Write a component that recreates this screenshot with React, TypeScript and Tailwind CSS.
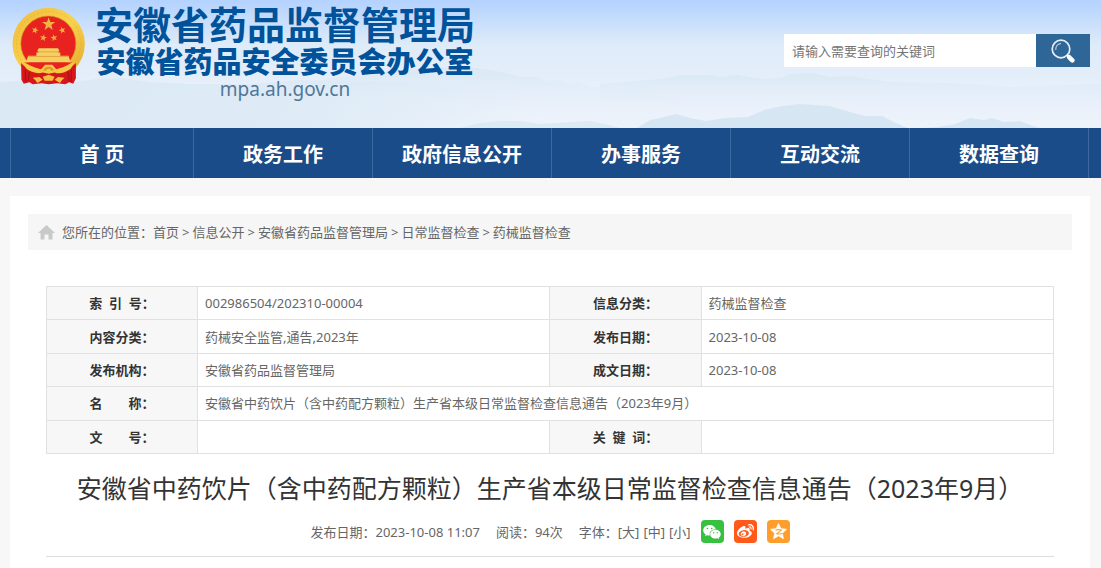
import React from "react";
import { AiFillWechat } from "react-icons/ai";
import { FaWeibo } from "react-icons/fa";

function starPoints(cx: number, cy: number, r: number, ratio = 0.4, turn = 0): string {
  return Array.from({ length: 10 }, (_, i) => {
    const radius = i % 2 === 0 ? r : r * ratio;
    const a = -Math.PI / 2 + turn + (i * Math.PI) / 5;
    return `${(cx + radius * Math.cos(a)).toFixed(1)},${(cy + radius * Math.sin(a)).toFixed(1)}`;
  }).join(" ");
}

function Emblem() {
  return (
    <svg viewBox="33 21 225 235" className="h-[78px] w-[75px] shrink-0" role="img" aria-label="国徽">
      <defs>
        <linearGradient id="gold" x1="0" y1="0" x2="1" y2="1">
          <stop offset="0" stopColor="#f0b93a" />
          <stop offset="0.5" stopColor="#f9d34c" />
          <stop offset="1" stopColor="#e3a62c" />
        </linearGradient>
      </defs>
      <circle cx="146" cy="132" r="109" fill="url(#gold)" />
      <circle cx="146" cy="132" r="97" fill="none" stroke="#d99b28" strokeWidth="2" strokeDasharray="7 5" opacity="0.5" />
      <path d="M63 190 64 240 71 252 88 248 98 254 124 251 146 254 172 251 196 254 208 248 220 252 228 236 228 190 210 206 146 216 80 206Z" fill="#d5161b" />
      <circle cx="145" cy="131" r="83" fill="#e8221f" stroke="#d69a26" strokeWidth="2" />
      <polygon points={starPoints(146, 73, 21)} fill="#f0b545" />
      <polygon points={starPoints(105, 91, 11, 0.4, 0.3)} fill="#efb040" />
      <polygon points={starPoints(187, 91, 11, 0.4, -0.3)} fill="#efb040" />
      <polygon points={starPoints(130, 114, 11, 0.4, 0.2)} fill="#efb040" />
      <polygon points={starPoints(162, 114, 11, 0.4, -0.2)} fill="#efb040" />
      <path d="M116 145H174L179 154H175V158H181V168H206L212 188H78L84 168H109V158H115V154H111Z" fill="#f6cf63" />
      <path d="M114 156H176M84 170H206" stroke="#d9912c" strokeWidth="2" />
      <path d="M72 188H218L200 200 176 206 146 194 116 206 90 200Z" fill="#e8221f" />
      <path d="M80 192C96 200 112 208 124 208L135 195H157L168 208C180 208 196 200 210 192L224 186 212 208C194 220 176 224 164 218L146 222 128 218C116 224 94 218 80 208L66 186Z" fill="#f6c944" />
      <path d="M130 212A17 17 0 0 1 162 212L154 212A9 9 0 0 0 138 212Z" fill="#e0962a" />
      <path d="M128 231 146 225 164 231 158 243H134ZM98 234 118 232 128 240 112 250 106 242ZM194 234 174 232 164 240 180 250 186 242Z" fill="#f3bd3e" />
      <path d="M76 210V246M88 216 84 244M214 210V246M204 216 208 244" stroke="#a80f14" strokeWidth="3" />
    </svg>
  );
}

function Mountains() {
  return (
    <svg
      viewBox="0 0 1101 128"
      preserveAspectRatio="none"
      className="pointer-events-none absolute inset-0 h-full w-full"
      aria-hidden="true"
    >
      <defs>
        <linearGradient id="far" x1="0" y1="0" x2="0" y2="1">
          <stop offset="0" stopColor="#d6e7f3" stopOpacity="0.75" />
          <stop offset="0.7" stopColor="#e6eff8" stopOpacity="0" />
        </linearGradient>
        <linearGradient id="left" x1="0" y1="0" x2="1" y2="0">
          <stop offset="0" stopColor="#dbe9f4" />
          <stop offset="0.6" stopColor="#dceaf5" stopOpacity="0.8" />
          <stop offset="1" stopColor="#dceaf5" stopOpacity="0" />
        </linearGradient>
      </defs>
      <path d="M0 82 30 80 62 84 95 79 122 78 150 82 190 84 250 84 300 80 400 82 540 90V128H0Z" fill="url(#left)" />
      <path d="M290 90 330 78 360 76 400 70 440 68 475 68 502 72 522 77 537 77 549 82 558 80 568 84 579 82 590 87 625 88 650 92 700 110 650 128 290 128Z" fill="url(#far)" />
      <path d="M600 84 660 79 680 75 706 75 720 77 738 75 762 79 780 78 792 74 812 73 830 77 850 76 890 82 950 83 1010 87 1101 84V128L600 128Z" fill="url(#far)" />
      <path d="M460 128 480 123 500 121 520 121 540 124 570 122 590 121 605 124 620 128Z" fill="#dceaf4" />
      <path d="M637 128 650 120 664 117 677 114 690 118 706 121 725 118 748 117 764 110 782 106 800 104 830 106 850 112 865 116 882 116 896 123 908 128Z" fill="#d6e7f3" />
      <path d="M922 128 938 127 955 124 970 118 984 120 992 118 1004 122 1020 121 1030 125 1040 128Z" fill="#d6e7f3" />
    </svg>
  );
}

function Magnifier() {
  return (
    <svg viewBox="0 0 24 24" className="h-6 w-6" fill="none" aria-hidden="true">
      <circle cx="10" cy="10" r="8.8" stroke="#e6eef5" strokeWidth="1.7" />
      <path d="M4.800 10.500A5.600 5.600 0 0 1 9.500 4.600" stroke="#c5d6e5" strokeWidth="1.1" strokeLinecap="round" />
      <path d="M16 16 17.500 17.500" stroke="#fff" strokeWidth="2" />
      <path d="M18.300 18.300 21.300 21.300" stroke="#fff" strokeWidth="4.600" strokeLinecap="round" />
    </svg>
  );
}

function QzoneStar() {
  return (
    <svg viewBox="0 0 24 24" className="h-[19px] w-[19px]" aria-hidden="true">
      <polygon points={starPoints(12, 12.5, 10.5, 0.48)} fill="#fff" stroke="#fff" strokeWidth="1" strokeLinejoin="round" />
      <path d="M8 10.200 Q12 9.200 15.600 10.200 L9.800 14.800 Q13 15.600 17 14.600" fill="none" stroke="#ff9e2c" strokeWidth="1.400" />
    </svg>
  );
}

const navItems = ["政务工作", "政府信息公开", "办事服务", "互动交流", "数据查询"];
const crumbs = ["首页", "信息公开", "安徽省药品监督管理局", "日常监督检查", "药械监督检查"];
const navLink = "flex h-[50px] items-center justify-center pt-1 text-xl font-bold text-white";
const labelCell = "border border-[#e1e1e1] bg-[#f7f7f7] p-0 text-center font-bold text-[#333] whitespace-pre";
const valueCell = "border border-[#e1e1e1] py-0 px-[7px] text-[#666]";

export default function App() {
  return (
    <div className="flex min-h-screen flex-col bg-[#f7f7f7] font-['Noto_Sans','Noto_Sans_CJK_SC',sans-serif] text-[13px] leading-5 text-[#666]">
      <header className="relative h-32 bg-linear-to-b from-[#b3d2ff] via-[#deebf9] via-35% to-[#eef3fb]">
        <Mountains />
        <div className="relative flex items-start justify-between px-[11px]">
          <a href="#home" className="flex items-start pt-[5px] text-[#00529a]">
            <span className="pt-[2px]"><Emblem /></span>
            <span className="flex flex-col items-center pl-[9px]">
              <span className="text-[38px] leading-[38px] font-bold">安徽省药品监督管理局</span>
              <span className="text-[29px] leading-[38px] font-black">安徽省药品安全委员会办公室</span>
              <span className="text-[19px] leading-4 font-normal text-[#4f7799]">mpa.ah.gov.cn</span>
            </span>
          </a>
          <form className="mt-[34px] flex h-[33px]" onSubmit={(e) => e.preventDefault()}>
            <input
              type="text"
              aria-label="搜索关键词"
              placeholder="请输入需要查询的关键词"
              className="w-[252px] bg-white px-2 text-[13px] outline-none placeholder:text-[#757575]"
            />
            <button type="submit" aria-label="搜索" className="flex w-[54px] items-center justify-center bg-[#2f6698]">
              <Magnifier />
            </button>
          </form>
        </div>
      </header>

      <nav className="bg-[#1a4c89] px-[10px]">
        <ul className="mr-[2px] flex border-l border-[#3d6a9c]">
          <li className="flex-[183] border-r border-[#3d6a9c]">
            <a href="#home" className={navLink}>首 页</a>
          </li>
          {navItems.map((item) => (
            <li key={item} className="flex-[179] border-r border-[#3d6a9c]">
              <a href={`#${item}`} className={navLink}>{item}</a>
            </li>
          ))}
        </ul>
      </nav>

      <main className="mt-[18px] mr-[11px] ml-[10px] flex-1 bg-white px-[18px] pt-[18px]">
        <div className="flex h-9 items-center bg-[#f6f6f6] pl-[10px]">
          <svg viewBox="0 0 17 15" className="mr-[7px] h-[15px] w-[17px]" fill="#c9c9c9" aria-hidden="true">
            <path d="M8.500 0 17 8H14.500V14.500H10.500V9.500H6.500V14.500H2.500V8H0Z" />
          </svg>
          <span>您所在的位置：</span>
          {crumbs.map((crumb, i) => (
            <React.Fragment key={crumb}>
              {i > 0 && <span className="px-[3px]">&gt;</span>}
              <a href={`#${crumb}`}>{crumb}</a>
            </React.Fragment>
          ))}
        </div>

        <article className="px-[18px] pt-9">
          <table className="h-[168px] w-full table-fixed border-collapse">
            <colgroup>
              <col className="w-[15%]" />
              <col className="w-[35%]" />
              <col className="w-[15%]" />
              <col className="w-[35%]" />
            </colgroup>
            <tbody>
              <tr>
                <th scope="row" className={labelCell}>{"索\u00a0\u00a0引\u00a0\u00a0号："}</th>
                <td className={valueCell}>002986504/202310-00004</td>
                <th scope="row" className={labelCell}>信息分类：</th>
                <td className={valueCell}>药械监督检查</td>
              </tr>
              <tr>
                <th scope="row" className={labelCell}>内容分类：</th>
                <td className={valueCell}>药械安全监管,通告,2023年</td>
                <th scope="row" className={labelCell}>发布日期：</th>
                <td className={valueCell}>2023-10-08</td>
              </tr>
              <tr>
                <th scope="row" className={labelCell}>发布机构：</th>
                <td className={valueCell}>安徽省药品监督管理局</td>
                <th scope="row" className={labelCell}>成文日期：</th>
                <td className={valueCell}>2023-10-08</td>
              </tr>
              <tr>
                <th scope="row" className={labelCell}>{"名\u3000\u3000称："}</th>
                <td className={valueCell} colSpan={3}>安徽省中药饮片（含中药配方颗粒）生产省本级日常监督检查信息通告（2023年9月）</td>
              </tr>
              <tr>
                <th scope="row" className={labelCell}>{"文\u3000\u3000号："}</th>
                <td className={valueCell} />
                <th scope="row" className={labelCell}>{"关\u00a0\u00a0键\u00a0\u00a0词："}</th>
                <td className={valueCell} />
              </tr>
            </tbody>
          </table>

          <h1 className="mt-4 text-center text-[25px] leading-9 font-normal text-[#333]">
            安徽省中药饮片（含中药配方颗粒）生产省本级日常监督检查信息通告（2023年9月）
          </h1>

          <div className="flex items-center justify-center border-b border-[#ddd] pt-[14px] pb-[13px]">
            <span>发布日期：2023-10-08 11:07</span>
            <span className="pl-4">阅读：94次</span>
            <span className="pl-4">字体：</span>
            <span className="flex gap-1">
              <button type="button">[大]</button>
              <button type="button">[中]</button>
              <button type="button">[小]</button>
            </span>
            <span className="flex gap-[10px] pl-[10px]">
              <a href="#wechat" aria-label="微信" className="flex h-[23px] w-[23px] items-center justify-center rounded bg-[#37c13f] text-white">
                <AiFillWechat size={20} />
              </a>
              <a href="#weibo" aria-label="微博" className="flex h-[23px] w-[23px] items-center justify-center rounded bg-[#ff5a1a] text-white">
                <FaWeibo size={17} />
              </a>
              <a href="#qzone" aria-label="QQ空间" className="flex h-[23px] w-[23px] items-center justify-center rounded bg-[#ff9e2c]">
                <QzoneStar />
              </a>
            </span>
          </div>
        </article>
      </main>
    </div>
  );
}
